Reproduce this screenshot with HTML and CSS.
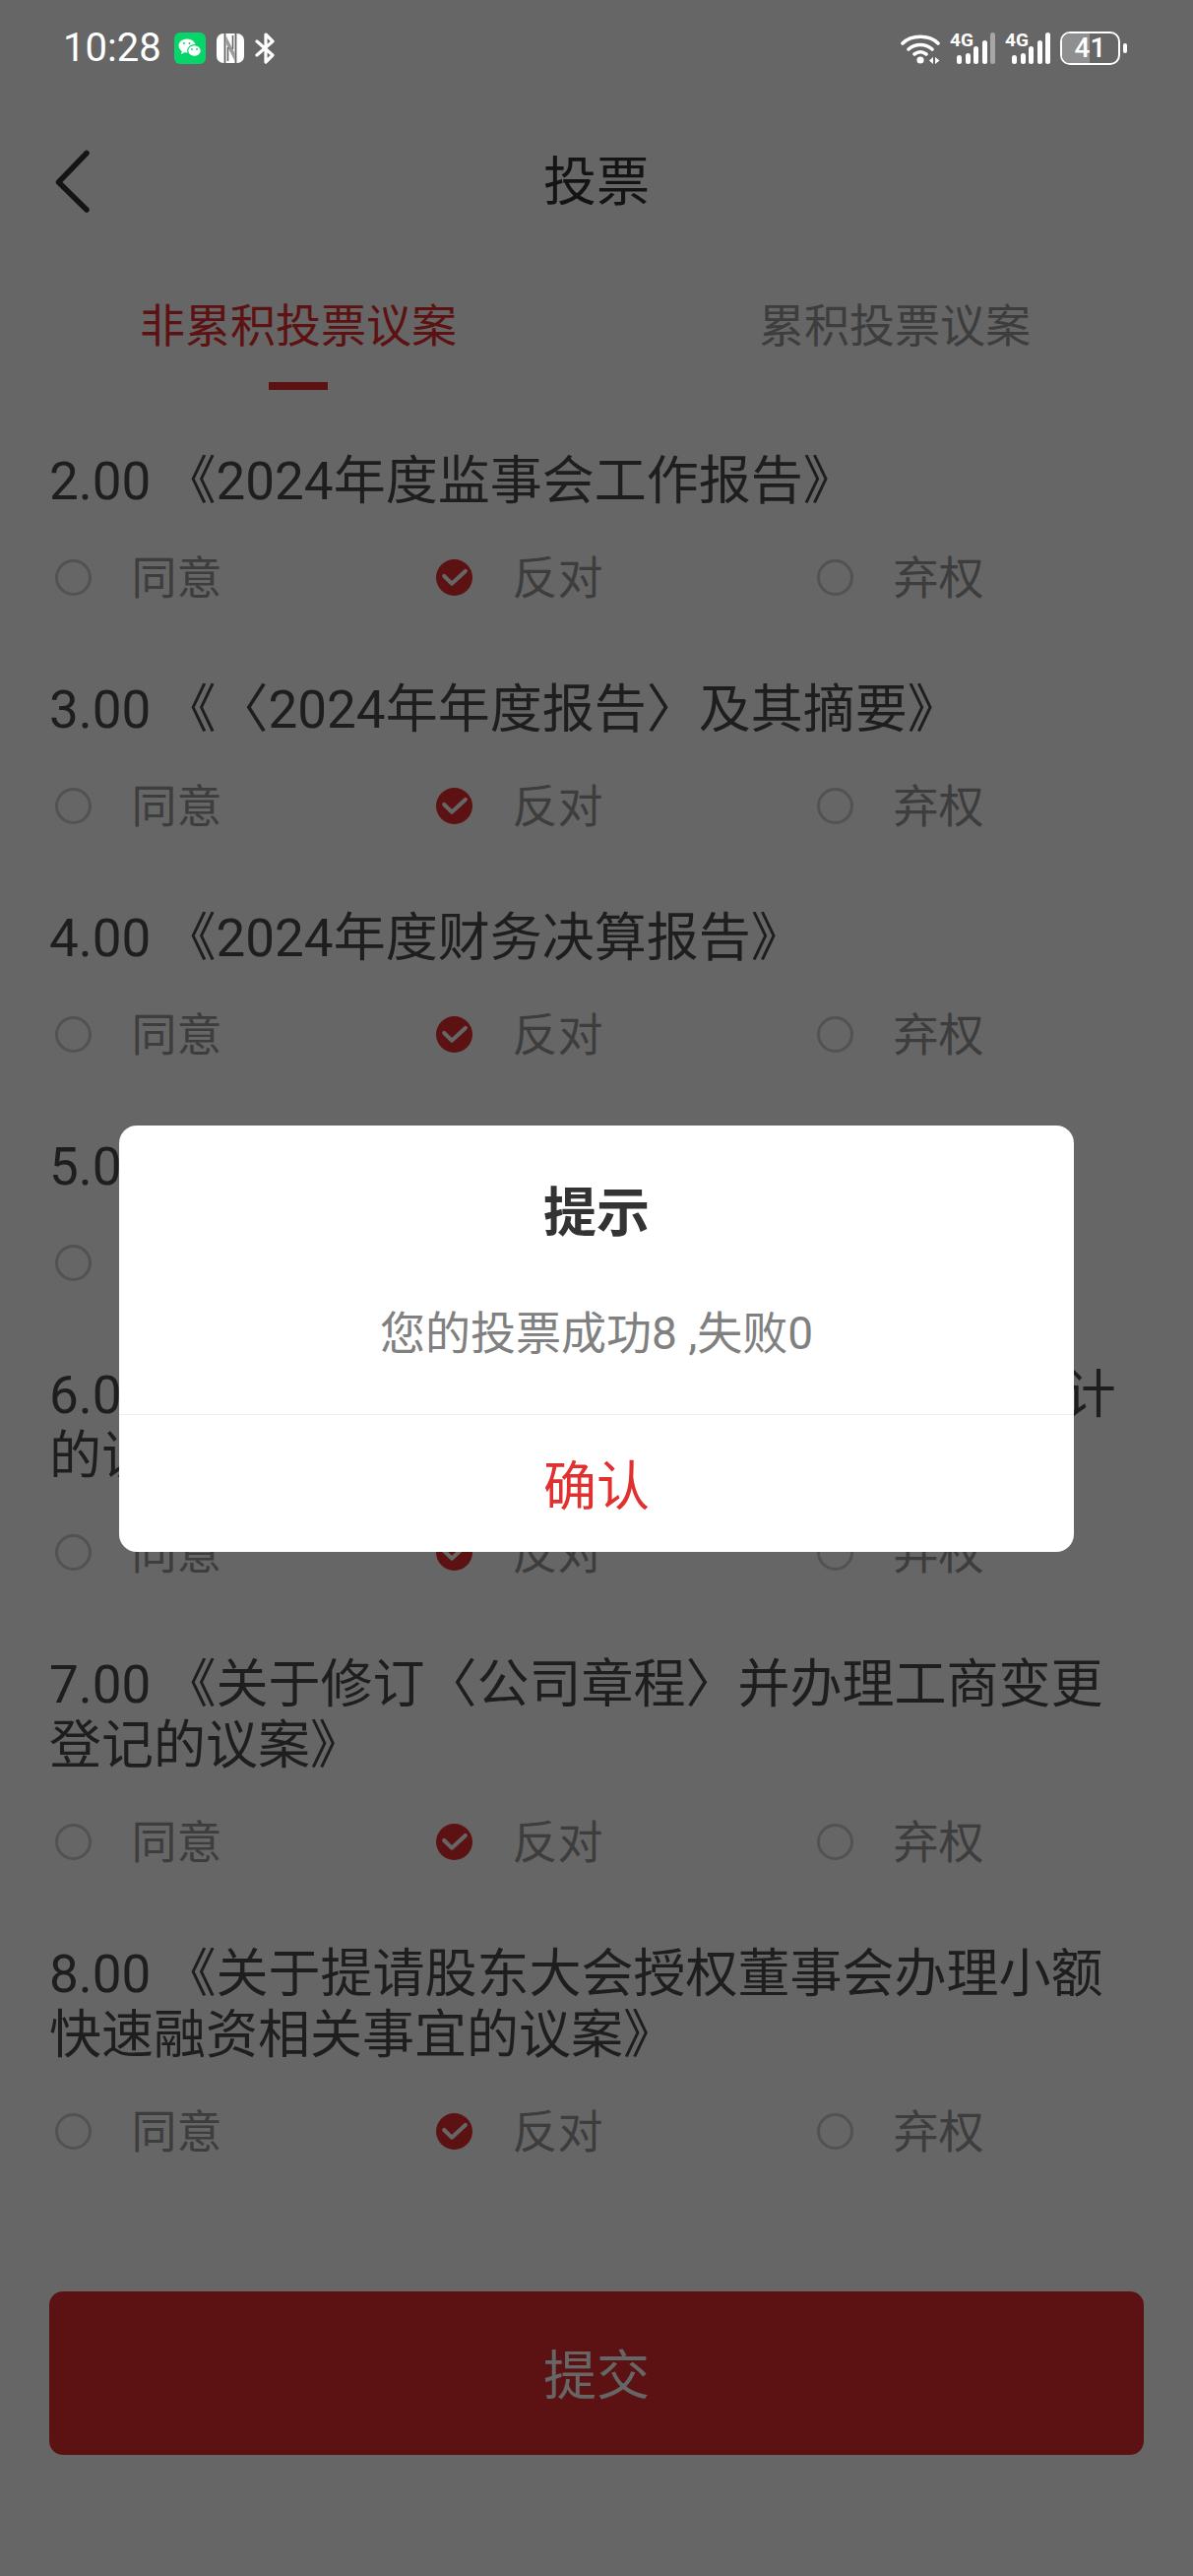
FILE: index.html
```html
<!DOCTYPE html>
<html lang="zh-CN">
<head>
<meta charset="utf-8">
<title>投票</title>
<link rel="stylesheet" href="styles.css">
</head>
<body>
<div class="page">
  <div class="status">
    <div class="status-left">
      <span class="time">10:28</span>
      <svg class="ic-wechat" viewBox="0 0 32 32"><rect width="32" height="32" rx="6" fill="#06d66a"/><ellipse cx="13" cy="13.5" rx="8.5" ry="7" fill="#fff"/><path d="M8 18l-1 4 4-2z" fill="#fff"/><ellipse cx="20.5" cy="18.5" rx="6.8" ry="5.8" fill="#fff" stroke="#06d66a" stroke-width="1.2"/><circle cx="10" cy="11" r="1" fill="#06d66a"/><circle cx="15.5" cy="11" r="1" fill="#06d66a"/><circle cx="18" cy="17" r=".9" fill="#06d66a"/><circle cx="23" cy="17" r=".9" fill="#06d66a"/></svg>
      <svg class="ic-nfc" viewBox="0 0 30 32"><rect x="1" y="1" width="28" height="30" rx="7" fill="#fff"/><path d="M9.500 1v30M20.500 1v30" stroke="#666" stroke-width="1.800"/><path d="M10.500 3l9 18v8l-9-18z" fill="#9a9a9a"/><path d="M12.500 15v14M17.500 3v14" stroke="#666" stroke-width="1.600"/></svg>
      <svg class="ic-bt" viewBox="0 0 22 32"><path d="M2 9l16 14-7 7V2l7 7L2 23" fill="none" stroke="#fff" stroke-width="3.200" stroke-linejoin="round" stroke-linecap="round"/></svg>
    </div>
    <div class="status-right">
      <svg class="ic-wifi" viewBox="0 0 40 31"><path d="M2 10C11 1 29 1 38 10M8 16c7-6 17-6 24 0M14 21c4-3 8-3 12 0" fill="none" stroke="#fff" stroke-width="3.600" stroke-linecap="round"/><circle cx="20" cy="27" r="3.600" fill="#fff"/><path d="M33 24v7l-4-3.500zM35 24v7l4.500-3.500z" fill="#fff"/></svg>
      <div class="sig"><span class="sig-label">4G</span><span class="bar b1"></span><span class="bar b2"></span><span class="bar b3"></span><span class="bar b4"></span><span class="bar b5 dim"></span></div>
      <div class="sig"><span class="sig-label">4G</span><span class="bar b1"></span><span class="bar b2"></span><span class="bar b3"></span><span class="bar b4"></span><span class="bar b5"></span></div>
      <div class="battery"><div class="batt-body"><span class="batt-fill"></span><span class="batt-num">41</span></div><span class="batt-tip"></span></div>
    </div>
  </div>

  <header class="nav">
    <svg class="back" viewBox="0 0 38 64"><path d="M32 3.500L3.500 33 32 61" fill="none" stroke="#333" stroke-width="5.500" stroke-linecap="round" stroke-linejoin="round"/></svg>
    <h1 class="nav-title">投票</h1>
  </header>

  <div class="tabs">
    <div class="tab active">非累积投票议案<span class="tab-line"></span></div>
    <div class="tab">累积投票议案</div>
  </div>

  <main class="list">
    <section class="item">
      <h2 class="q">2.00 《2024年度监事会工作报告》</h2>
      <div class="opts">
        <div class="opt"><span class="radio"></span>同意</div>
        <div class="opt"><svg class="check" viewBox="0 0 36 36"><circle cx="18" cy="18" r="18"/><path d="M8 16.500L15.500 24 29 11.600"/></svg>反对</div>
        <div class="opt"><span class="radio"></span>弃权</div>
      </div>
    </section>
    <section class="item">
      <h2 class="q">3.00 《〈2024年年度报告〉及其摘要》</h2>
      <div class="opts">
        <div class="opt"><span class="radio"></span>同意</div>
        <div class="opt"><svg class="check" viewBox="0 0 36 36"><circle cx="18" cy="18" r="18"/><path d="M8 16.500L15.500 24 29 11.600"/></svg>反对</div>
        <div class="opt"><span class="radio"></span>弃权</div>
      </div>
    </section>
    <section class="item">
      <h2 class="q">4.00 《2024年度财务决算报告》</h2>
      <div class="opts">
        <div class="opt"><span class="radio"></span>同意</div>
        <div class="opt"><svg class="check" viewBox="0 0 36 36"><circle cx="18" cy="18" r="18"/><path d="M8 16.500L15.500 24 29 11.600"/></svg>反对</div>
        <div class="opt"><span class="radio"></span>弃权</div>
      </div>
    </section>
    <section class="item">
      <h2 class="q">5.00 《2024年度利润分配预案》</h2>
      <div class="opts">
        <div class="opt"><span class="radio"></span>同意</div>
        <div class="opt"><svg class="check" viewBox="0 0 36 36"><circle cx="18" cy="18" r="18"/><path d="M8 16.500L15.500 24 29 11.600"/></svg>反对</div>
        <div class="opt"><span class="radio"></span>弃权</div>
      </div>
    </section>
    <section class="item">
      <h2 class="q">6.00 《关于续聘2025年度审计机构及内控审计的议案》</h2>
      <div class="opts">
        <div class="opt"><span class="radio"></span>同意</div>
        <div class="opt"><svg class="check" viewBox="0 0 36 36"><circle cx="18" cy="18" r="18"/><path d="M8 16.500L15.500 24 29 11.600"/></svg>反对</div>
        <div class="opt"><span class="radio"></span>弃权</div>
      </div>
    </section>
    <section class="item">
      <h2 class="q">7.00 《关于修订〈公司章程〉并办理工商变更登记的议案》</h2>
      <div class="opts">
        <div class="opt"><span class="radio"></span>同意</div>
        <div class="opt"><svg class="check" viewBox="0 0 36 36"><circle cx="18" cy="18" r="18"/><path d="M8 16.500L15.500 24 29 11.600"/></svg>反对</div>
        <div class="opt"><span class="radio"></span>弃权</div>
      </div>
    </section>
    <section class="item">
      <h2 class="q">8.00 《关于提请股东大会授权董事会办理小额快速融资相关事宜的议案》</h2>
      <div class="opts">
        <div class="opt"><span class="radio"></span>同意</div>
        <div class="opt"><svg class="check" viewBox="0 0 36 36"><circle cx="18" cy="18" r="18"/><path d="M8 16.500L15.500 24 29 11.600"/></svg>反对</div>
        <div class="opt"><span class="radio"></span>弃权</div>
      </div>
    </section>
  </main>

  <button class="submit">提交</button>
</div>

<div class="scrim">
  <div class="dialog">
    <div class="d-title">提示</div>
    <div class="d-msg">您的投票成功8 ,失败0</div>
    <div class="d-btn">确认</div>
  </div>
</div>
</body>
</html>
```
FILE: styles.css
```css
* { box-sizing: border-box; margin: 0; padding: 0; }
html, body { width: 1212px; height: 2616px; overflow: hidden; background: #fff; }
body { position: relative; font-family: Roboto, "Noto Sans CJK SC", sans-serif; color: #333; }
.page { width: 1212px; height: 2616px; background: #fff; }

.status { position: relative; z-index: 2; height: 100px; padding: 32px 67px 0 64px; display: flex; justify-content: space-between; align-items: flex-start; }
.status-left { display: flex; align-items: center; gap: 10px; height: 34px; }
.time { font: 400 40px/34px Roboto, sans-serif; color: #fff; margin-right: 3px; }
.ic-wechat { width: 32px; height: 32px; }
.ic-nfc { width: 30px; height: 32px; }
.ic-bt { width: 22px; height: 32px; }
.status-right { display: flex; align-items: center; gap: 10px; height: 34px; }
.ic-wifi { width: 40px; height: 31px; }
.sig { position: relative; display: flex; align-items: flex-end; justify-content: flex-end; gap: 3.5px; width: 46px; height: 32px; }
.sig-label { position: absolute; left: 0; top: 0; font: 700 19px/15px Roboto, sans-serif; color: #fff; }
.bar { display: block; width: 5px; background: #fff; border-radius: 3px; }
.b1 { height: 9px; }
.b2 { height: 11px; }
.b3 { height: 18px; }
.b4 { height: 24px; }
.b5 { height: 32px; }
.dim { background: #a6a6a6; }
.battery { display: flex; align-items: center; gap: 3px; }
.batt-body { position: relative; width: 61px; height: 34px; border: 2.5px solid #fff; border-radius: 10px; overflow: hidden; }
.batt-fill { position: absolute; left: 0; top: 0; bottom: 0; width: 49%; background: #8f8f8f; }
.batt-num { position: relative; display: block; text-align: center; font: 500 28px/29px Roboto, sans-serif; color: #fff; }
.batt-tip { width: 4px; height: 10px; background: #fff; border-radius: 2px; }

.nav { height: 168px; padding: 0 56px; display: grid; grid-template-columns: 1fr auto 1fr; align-items: center; }
.back { width: 38px; height: 64px; }
.nav-title { font-size: 54px; line-height: 64px; font-weight: 400; color: #333; margin-top: 3px; }

.tabs { display: flex; padding-top: 37px; }
.tab { width: 606px; text-align: center; font-size: 46px; line-height: 52px; color: #999; }
.tab.active { color: #e52e2e; }
.tab-line { display: block; width: 60px; height: 8px; margin: 31px auto 0; background: #e52e2e; }

.list { padding: 62px 50px 0; }
.item { padding-bottom: 73px; }
.item:last-child { padding-bottom: 0; }
.q { font-size: 53px; line-height: 62px; font-weight: 400; color: #4d4d4d; text-spacing-trim: space-all; }
.opts { display: grid; grid-template-columns: repeat(3, 387px); margin-top: 37px; height: 60px; padding-left: 6px; }
.opt { display: flex; align-items: center; gap: 40.5px; font-size: 46px; line-height: 60px; color: #999; }
.radio { flex: none; width: 37px; height: 37px; margin-bottom: 2px; border-radius: 50%; border: 3px solid #ccc; }
.check { flex: none; width: 37px; height: 37px; margin-bottom: 2px; fill: #e52e2e; }
.check path { fill: none; stroke: #fff; stroke-width: 4; stroke-linecap: round; stroke-linejoin: round; }

.submit { display: block; width: 1112px; height: 166px; margin: 132px 50px 0; padding-bottom: 4px; background: #e52e2e; color: #fff; border: 0; border-radius: 14px; font-family: inherit; font-size: 54px; }

.scrim { position: absolute; left: 0; top: 0; z-index: 1; width: 1212px; height: 2616px; background: rgba(0,0,0,.6); display: flex; align-items: flex-start; justify-content: center; padding-top: 1143px; }
.dialog { width: 970px; height: 433px; background: #fff; border-radius: 18px; display: flex; flex-direction: column; align-items: center; }
.d-title { font-size: 54px; line-height: 64px; font-weight: 700; color: #333; margin-top: 58px; }
.d-msg { font-size: 46px; line-height: 52px; color: #808080; margin-top: 63px; }
.d-btn { width: 100%; margin-top: 56px; padding-bottom: 3px; border-top: 1px solid #eee; flex: 1; display: flex; align-items: center; justify-content: center; font-size: 54px; color: #e03030; }
```
